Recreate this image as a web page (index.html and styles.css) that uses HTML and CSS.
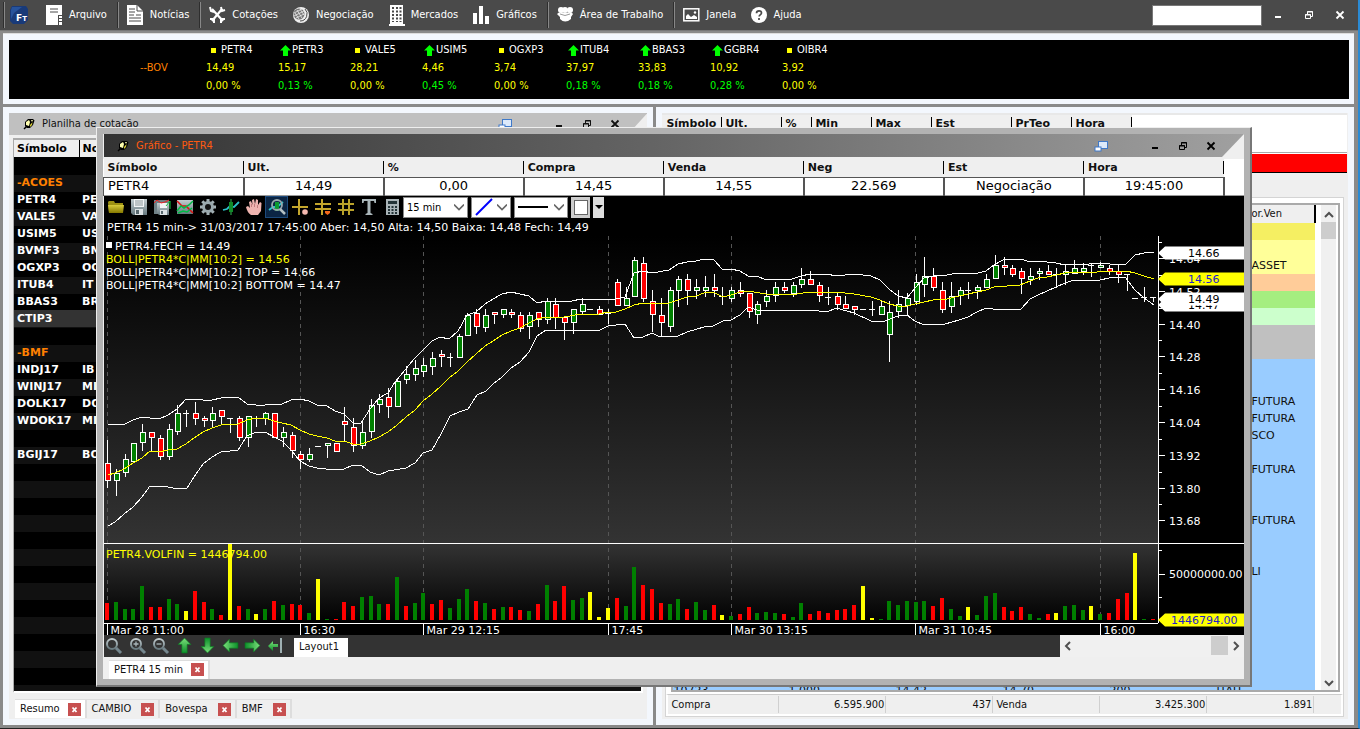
FILE: index.html
```html
<!DOCTYPE html>
<html lang="pt-BR">
<head>
<meta charset="utf-8">
<title>Gráfico - PETR4</title>
<link rel="stylesheet" href="styles.css">
</head>
<body>
<svg class="defs" aria-hidden="true">
  <defs>
    <linearGradient id="steel" x1="0" y1="0" x2="0" y2="1"><stop offset="0" stop-color="#c3cdd0"/><stop offset="1" stop-color="#66787e"/></linearGradient>
    <linearGradient id="leaf" x1="0" y1="0" x2="0" y2="1"><stop offset="0" stop-color="#7be07b"/><stop offset="1" stop-color="#0d8f2a"/></linearGradient>
    <linearGradient id="gold" x1="0" y1="0" x2="0" y2="1"><stop offset="0" stop-color="#d8cc3c"/><stop offset="1" stop-color="#857800"/></linearGradient>
    <symbol id="min" viewBox="0 0 10 10"><path d="M2 7h6" stroke="currentColor" stroke-width="2" fill="none"/></symbol>
    <symbol id="restore" viewBox="0 0 10 10"><path d="M1.500 4.500h5v4h-5zM3.500 4V1.500h5v5H7M1 5h6M3 2h6" stroke="currentColor" fill="none"/></symbol>
    <symbol id="close" viewBox="0 0 10 10"><path d="M1.500 1.500l7 7M8.500 1.500l-7 7" stroke="currentColor" stroke-width="1.800" fill="none"/></symbol>
    <symbol id="dock" viewBox="0 0 14 12"><rect x="4.500" y="1.500" width="9" height="7" fill="#dce9fa" stroke="#3f79c9"/><rect x="1" y="7" width="6" height="4" fill="#fff" stroke="#3f79c9"/></symbol>
    <symbol id="pin" viewBox="0 0 12 12"><path d="M1 11l3-3" stroke="#000" stroke-width="1.500"/><path d="M2 4l3-3h5l1.500 1.500L10 7 7 10H4L2 8z" fill="#000"/><path d="M3 4l3-2 1 2-1 4-3-1zM8 2h2l-1 2z" fill="#ffffb0"/><path d="M7 7l2.500-3L9 7 7 9z" fill="#d8d038"/></symbol>
    <symbol id="badge-x" viewBox="0 0 13 13"><path d="M4.500 4.500l4 4.500M8.500 4.500l-4 4.500" stroke="#fff" stroke-width="1.800" fill="none"/></symbol>
    <symbol id="lens" viewBox="0 0 18 18"><circle cx="7" cy="7" r="5" fill="none" stroke="url(#steel)" stroke-width="2"/><path d="M11 11l5 5" stroke="#75878e" stroke-width="3"/></symbol>
    <symbol id="arrow" viewBox="0 0 16 16"><path d="M8 1l6 6h-3.500v8h-5V7H2z" fill="url(#leaf)" stroke="#087a20" stroke-width=".6"/></symbol>
    <symbol id="up" viewBox="0 0 11 11"><path d="M5.500 0L11 5.500H8V11H3V5.500H0z" fill="#0f0"/></symbol>
    <symbol id="chev" viewBox="0 0 8 8"><path d="M0 2l4 4 4-4" fill="none" stroke="#666" stroke-width="1.300"/></symbol>
  </defs>
</svg>

<div class="app">
  <header class="menubar">
    <nav class="menu">
      <i class="sep first"></i>
      <button class="logo" aria-label="FT"><svg width="20" height="20" viewBox="0 0 20 20"><path d="M3 1h14l2 3v11l-4 4H4l-3-3V5z" fill="#193a78"/><path d="M3 2h10L5 8 2 14V5z" fill="#27539c"/><text x="7" y="16" class="logo-text">F<tspan class="logo-small">T</tspan></text></svg></button>
      <button class="item arquivo"><svg width="17" height="20" viewBox="0 0 17 20"><path d="M0 0h16v10h-4v10H0zM13 11h3v2h-3zM13 14h3v2h-3zM13 17h3v3h-3z" fill="#fff"/><path d="M4 4h8M4 7h8" stroke="#4a4a4a"/></svg>Arquivo</button>
      <i class="sep"></i>
      <button class="item"><svg width="17" height="20" viewBox="0 0 17 20"><path d="M0 0h10l6 6v14H0z" fill="#fff"/><path d="M10 0v6h6M2 4h6M2 7h6M2 10h5M2 13h12M2 16h12M9 10h5" stroke="#4a4a4a" fill="none"/></svg>Notícias</button>
      <i class="sep"></i>
      <button class="item"><svg width="17" height="18" viewBox="0 0 17 18"><path d="M3 3l11 12M13 3L3 15" stroke="#fff" stroke-width="2.200"/><path d="M1 1l1 4 3 1M16 4l-3 1-1-4M1 13h4v4M16 13h-4v4" stroke="#fff" stroke-width="2" fill="none"/></svg>Cotações</button>
      <button class="item"><svg width="17" height="18" viewBox="0 0 17 18"><circle cx="8" cy="9" r="8" fill="#eee"/><circle cx="6" cy="8" r="5.500" fill="#777"/><path d="M1 7l8-4M1 10l10-5M3 12l8-4M4 4l5 8M2 7l4 6M7 3l4 6" stroke="#eee" stroke-width=".8"/><path d="M12 3a7 7 0 0 1-5 12" fill="none" stroke="#4a4a4a" stroke-width="1"/></svg>Negociação</button>
      <button class="item"><svg width="16" height="21" viewBox="0 0 16 21"><path d="M1 0h13v19h2v2H0v-2h1z" fill="#fff"/><path d="M4 2v15M8 2v15M11.500 2v15" stroke="#4a4a4a" stroke-width="2" stroke-dasharray="2 1.500"/></svg>Mercados</button>
      <button class="item"><svg width="17" height="18" viewBox="0 0 17 18"><path d="M0 7h4v11H0zM6 0h4v18H6zM12 10h4v8h-4z" fill="#fff"/></svg>Gráficos</button>
      <i class="sep"></i>
      <button class="item"><svg width="17" height="16" viewBox="0 0 17 16"><circle cx="4" cy="3" r="3" fill="#fff"/><circle cx="8" cy="3" r="3" fill="#fff"/><circle cx="13" cy="3" r="3" fill="#fff"/><path d="M0 7q2-3 8-1 7-2 8 1l-2 3v2q-6 5-11 0v-2z" fill="#fff"/><path d="M3 7q5 3 10 0" stroke="#999" fill="none"/></svg>Área de Trabalho</button>
      <i class="sep"></i>
      <button class="item"><svg width="17" height="14" viewBox="0 0 17 14"><rect x=".8" y=".8" width="15" height="12" fill="none" stroke="#fff" stroke-width="1.500"/><path d="M3 11V8l2-2 3 3 3-2 3 2v2z" fill="#fff"/><circle cx="12" cy="4.500" r="1.200" fill="#fff"/></svg>Janela</button>
      <button class="item"><svg width="16" height="16" viewBox="0 0 16 16"><circle cx="8" cy="8" r="8" fill="#fff"/><path d="M5.500 6.200q0-2.400 2.500-2.400t2.500 2.200q0 1-1.300 1.900-1 .7-1 1.600M8 11v2" stroke="#4a4a4a" stroke-width="1.700" fill="none"/></svg>Ajuda</button>
    </nav>
    <div class="controls">
      <input class="search" type="text" aria-label="Pesquisar">
      <button aria-label="Minimizar"><svg width="10" height="10"><use href="#min"/></svg></button>
      <button aria-label="Restaurar"><svg width="10" height="10"><use href="#restore"/></svg></button>
      <button aria-label="Fechar"><svg width="10" height="10"><use href="#close"/></svg></button>
    </div>
  </header>

  <section class="ticker-frame">
    <div class="ticker">
      <span class="market">--BOV</span>
      <div class="quote flat"><b><i class="dot"></i>PETR4</b><span>14,49</span><em>0,00 %</em></div>
      <div class="quote"><b><svg class="up" width="11" height="11"><use href="#up"/></svg>PETR3</b><span>15,17</span><em>0,13 %</em></div>
      <div class="quote flat"><b><i class="dot"></i>VALE5</b><span>28,21</span><em>0,00 %</em></div>
      <div class="quote"><b><svg class="up" width="11" height="11"><use href="#up"/></svg>USIM5</b><span>4,46</span><em>0,45 %</em></div>
      <div class="quote flat"><b><i class="dot"></i>OGXP3</b><span>3,74</span><em>0,00 %</em></div>
      <div class="quote"><b><svg class="up" width="11" height="11"><use href="#up"/></svg>ITUB4</b><span>37,97</span><em>0,18 %</em></div>
      <div class="quote"><b><svg class="up" width="11" height="11"><use href="#up"/></svg>BBAS3</b><span>33,83</span><em>0,18 %</em></div>
      <div class="quote"><b><svg class="up" width="11" height="11"><use href="#up"/></svg>GGBR4</b><span>10,92</span><em>0,28 %</em></div>
      <div class="quote flat"><b><i class="dot"></i>OIBR4</b><span>3,92</span><em>0,00 %</em></div>
    </div>
  </section>

  <main class="panes">
    <section class="pane sheet-pane">
      <div class="pane-title">
        <svg width="12" height="12"><use href="#pin"/></svg><span class="grow">Planilha de cotação</span>
        <button aria-label="Acoplar"><svg width="14" height="12"><use href="#dock"/></svg></button>
        <button class="gap" aria-label="Minimizar"><svg width="10" height="10"><use href="#min"/></svg></button>
        <button aria-label="Restaurar"><svg width="10" height="10"><use href="#restore"/></svg></button>
        <button aria-label="Fechar"><svg width="10" height="10"><use href="#close"/></svg></button>
      </div>
      <div class="sheet">
        <table>
          <thead><tr><th>Símbolo</th><th>No</th></tr></thead>
          <tbody>
            <tr><td></td><td></td></tr>
            <tr class="group"><td>-ACOES</td><td></td></tr>
            <tr><td>PETR4</td><td>PE</td></tr>
            <tr><td>VALE5</td><td>VA</td></tr>
            <tr><td>USIM5</td><td>US</td></tr>
            <tr><td>BVMF3</td><td>BM</td></tr>
            <tr><td>OGXP3</td><td>OG</td></tr>
            <tr><td>ITUB4</td><td>IT</td></tr>
            <tr><td>BBAS3</td><td>BR</td></tr>
            <tr class="selected"><td>CTIP3</td><td></td></tr>
            <tr><td></td><td></td></tr>
            <tr class="group"><td>-BMF</td><td></td></tr>
            <tr><td>INDJ17</td><td>IB</td></tr>
            <tr><td>WINJ17</td><td>MI</td></tr>
            <tr><td>DOLK17</td><td>DO</td></tr>
            <tr><td>WDOK17</td><td>MI</td></tr>
            <tr><td></td><td></td></tr>
            <tr><td>BGIJ17</td><td>BO</td></tr>
          </tbody>
        </table>
      </div>
      <div class="tabs">
        <div class="tab active">Resumo<button class="x" aria-label="Fechar Resumo"><svg width="13" height="13"><use href="#badge-x"/></svg></button></div>
        <div class="tab">CAMBIO<button class="x" aria-label="Fechar CAMBIO"><svg width="13" height="13"><use href="#badge-x"/></svg></button></div>
        <div class="tab">Bovespa<button class="x" aria-label="Fechar Bovespa"><svg width="13" height="13"><use href="#badge-x"/></svg></button></div>
        <div class="tab">BMF<button class="x" aria-label="Fechar BMF"><svg width="13" height="13"><use href="#badge-x"/></svg></button></div>
      </div>
    </section>

    <section class="pane book-pane">
      <div class="book-head">
        <b class="w56">Símbolo</b><b class="w60">Ult.</b><b class="w30">%</b><b class="w60">Min</b><b class="w60">Max</b><b class="w80">Est</b><b class="w60">PrTeo</b><b class="w60">Hora</b>
      </div>
      <div class="alert"></div>
      <div class="book-box">
        <div class="book">
          <div class="book-clip">
            <table>
              <colgroup><col class="c1"><col class="c2"><col class="c3"><col class="c4"><col class="c5"><col class="c6"><col></colgroup>
              <thead><tr><th colspan="6"></th><th>or.Ven</th></tr></thead>
              <tbody>
                <tr class="gold"><td colspan="7"></td></tr>
                <tr class="cream"><td colspan="7"></td></tr>
                <tr class="cream"><td colspan="6"></td><td>ASSET</td></tr>
                <tr class="peach"><td colspan="7"></td></tr>
                <tr class="green"><td colspan="7"></td></tr>
                <tr class="mint"><td colspan="7"></td></tr>
                <tr class="grey"><td colspan="7"></td></tr>
                <tr class="grey"><td colspan="7"></td></tr>
                <tr><td colspan="7"></td></tr>
                <tr><td colspan="7"></td></tr>
                <tr><td colspan="6"></td><td>FUTURA</td></tr>
                <tr><td colspan="6"></td><td>FUTURA</td></tr>
                <tr><td colspan="6"></td><td>SCO</td></tr>
                <tr><td colspan="7"></td></tr>
                <tr><td colspan="6"></td><td>FUTURA</td></tr>
                <tr><td colspan="7"></td></tr>
                <tr><td colspan="7"></td></tr>
                <tr><td colspan="6"></td><td>FUTURA</td></tr>
                <tr><td colspan="7"></td></tr>
                <tr><td colspan="7"></td></tr>
                <tr><td colspan="6"></td><td>LI</td></tr>
                <tr><td colspan="7"></td></tr>
                <tr><td colspan="7"></td></tr>
                <tr><td colspan="7"></td></tr>
                <tr><td colspan="7"></td></tr>
                <tr><td colspan="7"></td></tr>
                <tr><td colspan="7"></td></tr>
                <tr><td>10723</td><td>1.000</td><td>14,42</td><td>14,70</td><td>200</td><td>ITAU</td><td></td></tr>
              </tbody>
            </table>
          </div>
          <div class="vscroll">
            <svg width="10" height="8" viewBox="0 0 10 8"><path d="M1 6l4-4 4 4" fill="none" stroke="#505050" stroke-width="2"/></svg>
            <i></i>
            <svg width="10" height="8" viewBox="0 0 10 8"><path d="M1 2l4 4 4-4" fill="none" stroke="#505050" stroke-width="2"/></svg>
          </div>
        </div>
        <div class="totals"><span>Compra</span><span class="num">6.595.900</span><span class="num">437</span><span>Venda</span><span class="num">3.425.300</span><span class="num">1.891</span></div>
      </div>
    </section>
  </main>
</div>

<section class="window">
  <div class="win-title">
    <svg width="12" height="12"><use href="#pin"/></svg><span class="grow">Gráfico - PETR4</span>
    <button aria-label="Acoplar"><svg width="14" height="12"><use href="#dock"/></svg></button>
    <button class="gap" aria-label="Minimizar"><svg width="10" height="10"><use href="#min"/></svg></button>
    <button aria-label="Restaurar"><svg width="10" height="10"><use href="#restore"/></svg></button>
    <button aria-label="Fechar"><svg width="10" height="10"><use href="#close"/></svg></button>
  </div>
  <table class="summary">
    <thead><tr><th>Símbolo</th><th>Ult.</th><th>%</th><th>Compra</th><th>Venda</th><th>Neg</th><th>Est</th><th>Hora</th><th class="end"></th></tr></thead>
    <tbody><tr><td class="sym">PETR4</td><td>14,49</td><td>0,00</td><td>14,45</td><td>14,55</td><td>22.569</td><td>Negociação</td><td>19:45:00</td><td class="end"></td></tr></tbody>
  </table>
  <div class="tools">
    <button aria-label="Abrir"><svg width="18" height="18" viewBox="0 0 18 18"><path d="M1 4l1-1h5l1 2h8v10H2z" fill="#9c9012"/><path d="M1 7h16l-1 8H2z" fill="url(#gold)"/></svg></button>
    <button aria-label="Salvar"><svg width="18" height="18" viewBox="0 0 18 18"><path d="M1 1h16v16H3l-2-2z" fill="url(#steel)"/><path d="M4 1h10v8H4z" fill="#f2f5f6"/><path d="M5 3h8M5 5h8M5 7h8" stroke="#8b9699"/><path d="M5 11h8v6H5z" fill="#dce2e4"/><path d="M6 12h3v4H6z" fill="#5a6a70"/></svg></button>
    <button aria-label="Salvar gráfico"><svg width="18" height="18" viewBox="0 0 18 18"><path d="M1 2h15v14H1z" fill="#6f8085"/><path d="M4 5h12v12H6l-2-2z" fill="url(#steel)"/><path d="M7 5h7v5H7z" fill="#f2f5f6"/><path d="M7 12h7v5H7z" fill="#dce2e4"/><path d="M8 13h2v3H8z" fill="#5a6a70"/><path d="M1 5l3-3 4 3 4-1 4-2" stroke="#e22" fill="none"/><path d="M13 8l4-5v8" stroke="#1c4" fill="none"/></svg></button>
    <button aria-label="Gráfico"><svg width="18" height="18" viewBox="0 0 18 18"><path d="M1 2h16v14H1z" fill="url(#steel)"/><path d="M1 3l5 5 4 0 7 7" stroke="#d11" stroke-width="1.500" fill="none"/><path d="M1 13l4-5 3 2 5-3 4-4M2 15l5-2 4 1 5-4" stroke="#0b4" stroke-width="1.500" fill="none"/></svg></button>
    <button aria-label="Configurar"><svg width="18" height="18" viewBox="0 0 18 18"><path d="M9 1v16M1 9h16M3.300 3.300l11.400 11.400M14.700 3.300L3.300 14.700" stroke="#a3b0b4" stroke-width="3"/><circle cx="9" cy="9" r="6" fill="#9aa8ad"/><circle cx="9" cy="9" r="3" fill="#111"/></svg></button>
    <button aria-label="Candle"><svg width="18" height="18" viewBox="0 0 18 18"><path d="M1 12l4-1 3-3 4 1 5-5" stroke="#2bc3c9" stroke-width="1.800" fill="none"/><path d="M9 1v16" stroke="#3b5" stroke-width="1"/><path d="M7 4h4v10H7z" fill="#128c2a"/></svg></button>
    <button aria-label="Mover"><svg width="18" height="18" viewBox="0 0 18 18"><path d="M6 17q-4-3-5-8l2-1 2 2-1-6 2-1 1.500 4L7 2l2-1 1 5 1-5 2 1v5l2-3 1.500 1-.5 8-3 4z" fill="#efb4b0"/><path d="M6.500 6v3M9.500 6v3M12.500 7v3" stroke="#b66f70" stroke-width=".8"/></svg></button>
    <button class="on" aria-label="Lupa do gráfico"><svg width="18" height="18" viewBox="0 0 18 18"><path d="M1 12l4-3 4 0 6-5" stroke="#2bc3c9" stroke-width="1.800" fill="none"/><path d="M7 4h4v9H7z" fill="#0c9a30"/><circle cx="9" cy="7" r="5" fill="none" stroke="#98a8ad" stroke-width="1.800"/><path d="M12 11l5 5" stroke="#b3bfc3" stroke-width="2.500"/></svg></button>
    <button aria-label="Cruz"><svg width="18" height="18" viewBox="0 0 18 18"><path d="M8 1v16M1 9h16" stroke="#c4a62c" stroke-width="2"/><circle cx="14" cy="14" r="2.800" fill="#f5b9b0"/></svg></button>
    <button aria-label="Retas"><svg width="18" height="18" viewBox="0 0 18 18"><path d="M8 1v16M1 6h16M1 11h16" stroke="#c4a62c" stroke-width="2"/><path d="M11 13h5v2l-2.500 2-2.500-2z" fill="#f2691b"/></svg></button>
    <button aria-label="Grade"><svg width="18" height="18" viewBox="0 0 18 18"><path d="M6 1v16M12 1v16M1 6h16M1 12h16" stroke="#b9a22a" stroke-width="2"/></svg></button>
    <button aria-label="Texto"><svg width="18" height="18" viewBox="0 0 18 18"><path d="M2 1h14v4h-1.500l-.5-2h-3.500v12l2 1v1H5.500v-1l2-1V3H4l-.5 2H2z" fill="#aab6ba"/></svg></button>
    <button aria-label="Calculadora"><svg width="18" height="18" viewBox="0 0 18 18"><path d="M3 1h13v16H3z" fill="#aab4b8"/><path d="M5 3h9v3H5z" fill="#243438"/><path d="M6 8v8M9.500 8v8M13 8v8" stroke="#243438" stroke-width="2" stroke-dasharray="2 1"/></svg></button>
    <span class="combo period"><select aria-label="Período"><option>15 min</option></select><svg width="10" height="10"><use href="#chev"/></svg></span>
    <span class="combo pen"><select aria-label="Cor da linha"><option></option></select><svg width="18" height="18" viewBox="0 0 18 18"><path d="M1 17L17 1" stroke="#00f" stroke-width="2"/></svg><svg width="10" height="10"><use href="#chev"/></svg></span>
    <span class="combo stroke"><select aria-label="Espessura"><option></option></select><svg width="30" height="4"><path d="M0 2h30" stroke="#000" stroke-width="2"/></svg><svg width="10" height="10"><use href="#chev"/></svg></span>
    <button class="swatch" aria-label="Cor de fundo"><i></i></button>
    <button class="drop" aria-label="Mais cores"><svg width="8" height="5"><path d="M0 0h8L4 4z"/></svg></button>
  </div>
  <svg id="chart" class="chart" viewBox="104 219 1140 416" role="img" aria-label="PETR4 15 min"></svg>
  <div class="lower">
    <div class="nav">
      <button aria-label="Lupa"><svg width="18" height="18"><use href="#lens"/></svg></button>
      <button aria-label="Ampliar"><svg width="18" height="18" viewBox="0 0 18 18"><use href="#lens"/><path d="M4.500 7h5M7 4.500v5" stroke="#a9b6ba" stroke-width="1.300"/></svg></button>
      <button aria-label="Reduzir"><svg width="18" height="18" viewBox="0 0 18 18"><use href="#lens"/><path d="M4.500 7h5" stroke="#a9b6ba" stroke-width="1.300"/></svg></button>
      <button aria-label="Subir"><svg width="17" height="17"><use href="#arrow"/></svg></button>
      <button aria-label="Descer"><svg class="down" width="17" height="17"><use href="#arrow"/></svg></button>
      <button aria-label="Esquerda"><svg class="left" width="17" height="17"><use href="#arrow"/></svg></button>
      <button aria-label="Direita"><svg class="right" width="17" height="17"><use href="#arrow"/></svg></button>
      <button aria-label="Fim"><svg width="17" height="17" viewBox="0 0 17 17"><path d="M1 9l5-5v3h5v3H6v4z" fill="url(#leaf)"/><path d="M14 1v15" stroke="#9fb0b2" stroke-width="2"/></svg></button>
    </div>
    <button class="layout">Layout1</button>
    <div class="hscroll">
      <svg width="8" height="10" viewBox="0 0 8 10"><path d="M6 1L2 5l4 4" fill="none" stroke="#505050" stroke-width="2"/></svg>
      <i></i>
      <svg width="8" height="10" viewBox="0 0 8 10"><path d="M2 1l4 4-4 4" fill="none" stroke="#505050" stroke-width="2"/></svg>
    </div>
  </div>
  <div class="win-tabs"><div class="tab active">PETR4 15 min<button class="x" aria-label="Fechar PETR4 15 min"><svg width="13" height="13"><use href="#badge-x"/></svg></button></div></div>
</section>
<script src="chart.js"></script>
</body>
</html>
```
FILE: styles.css
```css
* { box-sizing: border-box; }
body { margin: 0; background: #f0f0f0; font: 11px/14px "DejaVu Sans Condensed", Tahoma, "DejaVu Sans", sans-serif; color: #111; overflow: hidden; }
button { margin: 0; padding: 0; border: 0; background: none; font: inherit; color: inherit; display: flex; align-items: center; justify-content: center; }
svg { display: block; flex: none; }
.defs { position: absolute; width: 0; height: 0; }
.grow { flex: 1; }
table { border-collapse: collapse; table-layout: fixed; width: 100%; }
th, td { padding: 0; font-family: "DejaVu Sans", Verdana, sans-serif; text-align: left; white-space: nowrap; overflow: hidden; }

.app { height: 100vh; display: flex; flex-direction: column; border-right: 2px solid #2a8ad4; background: #8a8a8a; border-bottom: 1px solid #222; }

.menubar { height: 31px; flex: none; background: #4a4a4a; color: #fff; display: flex; justify-content: space-between; align-items: center; border-bottom: 1px solid #777; }
.menu { display: flex; align-items: center; height: 100%; }
.item { gap: 6px; margin-right: 15px; white-space: nowrap; }
.arquivo { margin-left: 17px; }
.sep { width: 2px; height: 26px; background: #2e2e2e; border-right: 1px solid #888; margin-left: -5px; margin-right: 8px; }
.sep.first { margin: 0 4px 0 3px; }
.logo-text { font: bold 9px "DejaVu Sans", sans-serif; fill: #fff; }
.logo-small { font-size: 7px; }
.controls { display: flex; align-items: center; margin-right: 3px; }
.controls button { width: 31px; height: 24px; }
.search { width: 110px; height: 21px; border: 1px solid #777; background: #fff; padding: 0 4px; font: inherit; }

.ticker-frame { flex: none; margin: 2px 4px 3px 3px; padding: 6px 5px 5px 6px; background: #f3f7fd; border-top: 1px solid #ddd; }
.ticker { background: #000; height: 59px; display: flex; padding: 1px 0 0 197px; line-height: 18px; color: #ff0; position: relative; }
.market { position: absolute; left: 131px; top: 19px; color: #ff8000; }
.quote { width: 72px; display: flex; flex-direction: column; }
.quote b { font-weight: normal; color: #fff; display: flex; align-items: center; }
.quote em { font-style: normal; color: #0f0; }
.quote.flat em { color: #ff0; }
.dot { width: 5px; height: 5px; background: #ff0; margin: 0 5px; }
.up { margin: 0 1px 0 2px; }

.panes { flex: 1; min-height: 0; display: flex; gap: 3px; padding: 0 4px 3px 3px; }
.pane { min-width: 0; background: #efefef; border: 6px solid #f3f7fd; display: flex; flex-direction: column; overflow: hidden; }
.sheet-pane { flex: 650; }
.book-pane { flex: 698; }
.pane-title { flex: none; height: 22px; background: #c0c0c0; display: flex; align-items: center; padding: 0 22px 0 14px; gap: 7px; clip-path: polygon(0 0, 100% 0, calc(100% - 20px) 100%, 0 100%); }
.pane-title button, .win-title button { width: 21px; height: 20px; }
.pane-title .gap, .win-title .gap { margin-left: 26px; }
.sheet { flex: 1; min-height: 0; overflow: hidden; margin: 3px 4px 0; border: 2px solid #aaa; border-width: 2px 2px 2px 1px; border-right-color: #fff; border-bottom-color: #fff; background: repeating-linear-gradient(#000 0 17px, #111 17px 34px) 0 18px; }
.sheet table { color: #fff; font-weight: bold; }
.sheet tr { height: 17px; }
.sheet thead tr { height: 17px; background: #efefef; color: #000; }
.sheet th, .sheet td { padding-left: 3px; font-weight: bold; line-height: 14px; }
.sheet th:first-child, .sheet td:first-child { width: 65px; }
.sheet th:nth-child(2) { border-left: 1px solid #000; }
.sheet .group { color: #ff8000; }
.sheet .selected { background: #333; }
.tabs { flex: none; display: flex; padding: 6px 6px 1px; }
.tab { height: 19px; display: flex; align-items: center; gap: 10px; padding: 0 4px 0 5px; border-top: 1px solid #ddd; border-right: 2px solid #ddd; white-space: nowrap; }
.tab.active { background: #fff; gap: 8px; }
.x { width: 13px; height: 13px; background: #c75050; }

.book-head { flex: none; height: 40px; background: linear-gradient(90deg, #efefef 470px, #fff 470px); border-top: 2px solid #e8e8e8; display: flex; align-items: flex-start; padding: 2px 0 0 1px; margin-right: 1px; border-bottom: 1px solid #aaa; }
.book-head b { font: bold 11px/14px "DejaVu Sans", Verdana, sans-serif; padding-left: 3px; border-right: 1px solid #000; height: 12px; }
.w56 { width: 59px; } .w60 { width: 60px; } .w30 { width: 30px; } .w80 { width: 80px; }
.alert { flex: none; height: 20px; background: #f00; border-top: 1px solid #fff; border-bottom: 1px solid #000; margin-right: 1px; }
.book-box { flex: 1; min-height: 0; margin: 24px 4px 2px 3px; border: 1px solid #d4d4d4; background: #fff; display: flex; flex-direction: column; padding: 5px 0 0; }
.book { flex: 1; min-height: 0; border: 2px solid #aaa; margin: 0 3px 0 5px; display: flex; padding-right: 2px; }
.book-clip { flex: 1; min-width: 0; overflow: hidden; }
.book tr { height: 17px; background: #9cf; }
.book thead tr { background: #efefef; height: 18px; }
.book th { font: 11px/14px "DejaVu Sans Condensed", Tahoma, sans-serif; }
.book th:last-child { border-right: 2px solid #000; }
.book td { line-height: 14px; }
.book .c1 { width: 115px; } .book .c2, .book .c3, .book .c4, .book .c5 { width: 107px; } .book .c6 { width: 35px; }
.book .gold { background: #f5ef62; } .book .cream { background: #ff9; } .book .peach { background: #fc9; }
.book .green { background: #a5ee80; } .book .mint { background: #cfc; } .book .grey { background: #c0c0c0; }
.vscroll { flex: none; width: 15px; margin-left: 5px; background: #f0f0f0; display: flex; flex-direction: column; align-items: center; padding: 6px 0 3px; }
.vscroll i { width: 15px; height: 17px; background: #cdcdcd; margin: 3px 0 auto; }
.totals { flex: none; display: grid; grid-template-columns: 111px repeat(5, 107px) 1fr; height: 22px; margin-top: 2px; border: 2px solid #fff; border-top: 1px solid #ccc; background: #efefef; align-items: center; }
.totals span { padding: 0 1px 0 3px; border-right: 1px solid #d0d0d0; line-height: 17px; }
.totals .num { text-align: right; }

.window { position: absolute; left: 96px; right: 108px; top: 127px; border: 1px solid #eee; border-right: 2px solid #777; border-bottom: 2px solid #777; background: #efefef; box-shadow: inset 0 0 0 6px #b2b2b2; padding: 6px; }
.win-title { height: 23px; margin-left: 1px; background: linear-gradient(90deg, #333, #666 50%, #a0a0a0); display: flex; align-items: center; padding: 0 23px 0 13px; gap: 7px; clip-path: polygon(0 0, 100% 0, calc(100% - 22px) 100%, 0 100%); color: #ff5a10; }
.win-title button { color: #000; }
.summary { margin-top: 2px; background: #fff; border-bottom: 1px solid #999; }
.summary th { height: 18px; font-size: 11px; background: #efefef; padding-left: 4px; border-bottom: 1px solid #555; background-image: linear-gradient(#000, #000); background-size: 1px 13px; background-position: right center; background-repeat: no-repeat; }
.summary td { height: 18px; font-size: 13px; line-height: 16px; text-align: center; border-right: 2px solid #555; color: #000; }
.summary .sym { text-align: left; padding-left: 4px; border-left: 1px solid #555; }
.summary .end { width: 20px; border: 0; background: #fff; }
.tools { height: 23px; margin-left: 1px; background: #000; display: flex; align-items: center; }
.tools button { width: 23px; height: 22px; }
.tools .on { background: #0b2544; border: 1px solid #1c4a7c; }
.combo { height: 21px; margin-right: 3px; background: #fff; border: 1px solid #888; display: flex; align-items: center; justify-content: space-between; padding: 0 3px; position: relative; }
.combo select { position: absolute; inset: 0; width: 100%; border: 0; background: none; appearance: none; padding: 0 3px; font: inherit; line-height: 19px; }
.period { width: 65px; justify-content: flex-end; }
.pen { width: 40px; }
.stroke { width: 54px; }
.tools .swatch { width: 19px; height: 21px; background: #ccc; margin-right: 3px; }
.swatch i { width: 14px; height: 15px; background: #fff; border: 1px solid #666; }
.tools .drop { width: 11px; height: 21px; background: #ddd; }
.chart { width: calc(100% - 1px); margin-left: 1px; background: #000; font: 11px "DejaVu Sans", Verdana, sans-serif; fill: #fff; }
.lower { margin-left: 1px; height: 22px; background: #333; display: flex; }
.nav { display: flex; width: 190px; justify-content: space-between; padding: 0 10px 0 1px; }
.layout { background: #fff; height: 19px; align-self: flex-end; padding: 0 9px 0 5px; }
.down { transform: rotate(180deg); } .left { transform: rotate(-90deg); } .right { transform: rotate(90deg); }
.hscroll { margin-left: auto; width: 184px; background: #f0f0f0; display: flex; align-items: center; padding: 0 4px; }
.hscroll i { width: 17px; height: 19px; background: #cdcdcd; margin: 0 4px 0 auto; }
.win-tabs { height: 22px; display: flex; padding: 3px 0 0 5px; margin-left: 1px; }
```
FILE: chart.js
```js
// Candles: colour (g/r/d), high, body top, body bottom, low, in chart units.
const candles = `r440,463,480,487 g469,473,480,495 g454,459,472,476 g443,443,461,461 g424,432,442,450 r432,432,437,450 r435,438,456,459 g424,429,456,459
g405,413,431,434 d410,413,413,426 r402,413,418,424 r416,418,420,426 g407,413,420,426 r410,410,416,424 d418,418,418,432 r416,418,437,440
g416,416,437,446 d416,418,418,426 g412,413,418,424 r413,413,437,437 g427,432,437,446 r432,435,450,457 r451,454,459,468 g448,454,459,461
d446,446,446,446 g443,443,445,457 r443,443,451,451 r407,421,424,440 r418,427,445,451 g422,432,445,448 g399,405,431,437 g394,399,404,412
r388,397,406,417 g379,381,406,406 g366,374,379,383 g360,368,374,380 g358,365,371,376 g352,358,366,374 r350,354,356,366 d353,357,357,366
g334,336,357,357 g313,315,335,335 r309,313,326,333 g309,315,327,331 r312,312,314,323 g309,309,314,317 r309,312,314,317 r312,315,328,331
g312,315,326,338 r312,312,319,326 g298,301,319,323 r298,304,317,328 r317,317,322,339 g309,309,322,333 g298,304,311,314 d309,309,309,309
r306,309,314,314 d309,313,313,323 r279,282,305,305 g287,298,305,305 g257,260,296,296 r257,263,298,301 r290,301,314,331 r298,315,322,335
g287,290,326,331 g276,279,290,306 r274,279,290,304 g279,287,290,298 g276,287,290,296 r274,287,290,296 d287,296,296,304 g287,290,298,301
r282,290,293,296 r293,293,311,317 g301,304,314,323 g290,296,301,306 g282,287,295,301 r282,287,290,292 g282,285,293,296 g268,279,284,287
r271,279,284,284 r282,285,295,301 d287,297,297,304 r293,296,304,309 r296,304,308,308 r306,306,309,314 d309,309,309,309 d301,309,309,315
g301,306,314,314 g301,312,334,361 g290,304,311,317 g293,298,305,315 g274,282,301,304 g257,276,284,296 r268,276,287,290 r282,290,309,312
g282,296,306,312 g287,290,295,304 d282,290,290,298 g285,287,290,298 g274,279,287,287 g255,265,278,278 r257,265,267,274 r265,268,274,276
r268,271,278,293 g268,276,279,284 g268,271,273,279 r265,271,274,274 d268,274,274,287 g265,271,274,284 g260,268,273,273 g263,268,271,274
d263,265,265,276 g262,265,267,267 r265,268,271,274 r265,271,274,282 d274,274,274,290 d298,298,298,298 d287,297,297,301 d297,297,297,301`.split(/\s+/);

const volume = `r603 g602 g609 g609 g586 r607 r607 g599 g604 y611 r591 r602 g609 r615 y544 r606 g609 y614 g609 r601 g605 r604 r605 g613
y579 g619 r619 r602 r606 g597 g596 g604 r604 g577 r606 g603 g593 r604 r600 g608 g599 g589 r601 g603 r609 g607 r607 r610 g611 r604 g585
r601 r586 g600 g598 y592 y617 y608 r598 g606 g567 r585 r589 r603 g604 g599 r609 g602 g610 r605 y615 g616 r614 r607 g613 g612 g613 r614
g617 g603 r614 r611 r613 r610 r609 r605 y586 y618 g619 g601 g605 g601 g602 g601 r606 r598 g609 g616 y607 g615 g596 g593 r607 r611 r607
g614 g618 r614 y613 g606 g605 g610 y606 g614 r613 r599 r593 y553 g619 r619`.split(/\s+/);

const upper = "108,424 125,424 133,420 142,417 150,418 159,419 168,415 177,409 186,399 195,399 203,400 212,400 221,398 230,397 238,397 247,404 256,405 265,405 282,404 291,400 300,399 309,401 317,405 327,406 335,411 344,414 354,424 361,423 370,409 379,398 388,393 395,382 405,370 414,359 423,350 432,341 440,337 449,339 458,331 467,315 476,312 485,304 493,299 502,294 511,292 520,294 529,296 537,303 546,301 564,302 572,301 581,299 599,299 616,299 625,297 634,273 643,271 652,273 669,270 678,264 687,262 696,261 704,259 713,259 723,270 731,269 740,271 748,276 757,276 766,280 775,279 783,280 792,279 801,276 810,274 827,274 836,276 854,274 871,276 880,280 889,289 898,296 907,298 915,288 924,278 933,276 947,275 957,273 978,273 986,271 994,265 1003,260 1012,259 1021,259 1030,262 1038,261 1056,263 1065,265 1074,264 1082,265 1097,263 1110,264 1126,264 1135,255 1144,253 1154,252";
const middle = "108,475 115,473 124,469 133,463 142,458 150,451 159,452 168,450 177,449 186,444 194,438 203,432 212,428 221,425 230,424 238,424 247,420 256,418 265,418 274,421 282,423 291,425 300,430 309,434 317,436 327,438 335,441 344,441 353,444 361,444 370,441 379,437 388,432 397,425 406,417 415,410 423,401 432,394 440,387 449,378 458,371 467,362 476,354 485,346 493,341 502,335 511,331 520,328 529,323 537,319 546,317 564,317 581,314 599,314 608,312 616,312 625,309 634,305 643,303 652,303 660,304 669,303 678,300 687,297 696,296 704,293 713,292 723,297 731,295 740,292 748,291 766,294 797,294 810,292 819,293 836,292 854,294 871,297 880,300 889,304 898,306 907,306 915,304 924,302 933,300 947,299 959,296 977,292 986,290 994,287 1020,285 1030,281 1038,278 1047,277 1056,275 1065,273 1074,272 1097,272 1113,271 1126,271 1135,273 1144,276 1154,279";
const lower = "108,526 115,522 124,514 133,507 142,497 150,486 168,487 178,489 187,488 194,477 203,464 212,457 221,452 230,451 238,450 247,436 256,432 265,432 274,437 282,441 291,450 300,461 309,466 317,468 335,470 344,469 353,465 361,465 370,472 379,475 388,471 406,468 415,463 423,453 432,450 441,434 450,416 459,412 468,409 477,395 486,391 493,384 502,377 511,368 520,362 529,352 537,336 546,330 555,331 564,330 600,330 608,326 625,324 634,338 643,337 652,333 660,337 678,336 687,332 704,327 713,326 723,321 731,320 740,315 748,307 757,310 783,310 797,311 810,310 827,312 836,308 854,313 871,321 885,321 898,316 907,315 915,321 924,325 945,324 959,320 968,317 977,312 986,308 1000,310 1021,309 1030,299 1038,295 1047,291 1056,287 1065,283 1074,280 1100,280 1109,278 1117,277 1126,278 1135,290 1144,298 1154,305";

const colours = { g: "#008000", r: "#f00", y: "#ff0" };
const xAt = i => Math.round(107 + i * 8.79);
const rect = (x, y, w, h, fill, extra = "") => `<rect x="${x}" y="${y}" width="${w}" height="${h}" fill="${fill}" ${extra}/>`;
const line = (x1, y1, x2, y2, stroke = "#fff", extra = "") => `<path d="M${x1} ${y1}L${x2} ${y2}" stroke="${stroke}" fill="none" ${extra}/>`;
const text = (x, y, s, fill = "#fff") => `<text x="${x}" y="${y}" fill="${fill}">${s}</text>`;
const curve = (points, stroke) => `<polyline points="${points}" fill="none" stroke="${stroke}" shape-rendering="crispEdges"/>`;
const tag = (y, s, fill, ink, x = 1188) => `<path d="M1158 ${y}l7-6.500h79v13h-79z" fill="${fill}"/>` + text(x, y + 4, s, ink);

let out = `<defs>
<linearGradient id="priceBg" x1="0" y1="0" x2="0" y2="1"><stop offset="0"/><stop offset="1" stop-color="#333"/></linearGradient>
<linearGradient id="volumeBg" x1="0" y1="0" x2="0" y2="1"><stop offset="0" stop-color="#333"/><stop offset="1"/></linearGradient></defs>`;
out += rect(104, 236, 1054, 307, "url(#priceBg)") + rect(104, 544, 1054, 79, "url(#volumeBg)");

const times = [[107.5, "Mar 28 11:00"], [300.5, "16:30"], [423.5, "Mar 29 12:15"], [608.5, "17:45"], [731.5, "Mar 30 13:15"], [915.5, "Mar 31 10:45"], [1100.5, "16:00"]];
for (const [x, label] of times) {
  out += line(x, 236, x, 620, "#555", 'stroke-dasharray="4 4"') + line(x, 624, x, 635) + text(x + 3, 634, label);
}

out += text(107, 231, "PETR4 15 min-&gt; 31/03/2017 17:45:00 Aber: 14,50 Alta: 14,50 Baixa: 14,48 Fech: 14,49");
out += rect(106, 242, 6, 6, "#fff") + text(115, 250, "PETR4.FECH = 14.49");
out += text(106, 263, "BOLL|PETR4*C|MM[10:2] = 14.56", "#ff0");
out += text(106, 276, "BOLL|PETR4*C|MM[10:2] TOP = 14.66");
out += text(106, 289, "BOLL|PETR4*C|MM[10:2] BOTTOM = 14.47");
out += text(106, 558, "PETR4.VOLFIN = 1446794.00", "#ff0");

candles.forEach((c, i) => {
  const [high, top, bottom, low] = c.slice(1).split(",").map(Number);
  const x = xAt(i);
  if (low > high) out += rect(x, high, 1, low - high + 1, "#fff");
  if (c[0] === "d") out += rect(x - 3, top, 6, 1, "#fff");
  else out += rect(x - 2, top, 5, Math.max(bottom - top, 2), colours[c[0]], 'stroke="#fff" shape-rendering="crispEdges"');
});
out += curve(upper, "#fff") + curve(lower, "#fff") + curve(middle, "#ff0");

volume.forEach((v, i) => {
  const y = Number(v.slice(1));
  out += rect(xAt(i) - 2, y, 4, 620 - y, colours[v[0]]);
});

out += line(104, 543.5, 1244, 543.5) + line(104, 623.5, 1158, 623.5) + line(1158.5, 236, 1158.5, 623);
["14.64", "14.52", "14.40", "14.28", "14.16", "14.04", "13.92", "13.80", "13.68"].forEach((s, i) => {
  const y = Math.round(258 + i * 32.8) + 0.5;
  out += line(1158, y, 1165, y) + line(1158, y - 16, 1162, y - 16) + text(1169, y + 4, s);
});
out += line(1158, 550.5, 1162, 550.5) + line(1158, 574.5, 1165, 574.5) + line(1158, 597.5, 1162, 597.5) + text(1169, 578, "50000000.00");
out += tag(253, "14.66", "#fff", "#000") + tag(279, "14.56", "#ff0", "#22c") + tag(305, "14.47", "#fff", "#000") + tag(299, "14.49", "#fff", "#000") + tag(620, "1446794.00", "#ff0", "#22c", 1171);
document.getElementById("chart").innerHTML = out;
```
